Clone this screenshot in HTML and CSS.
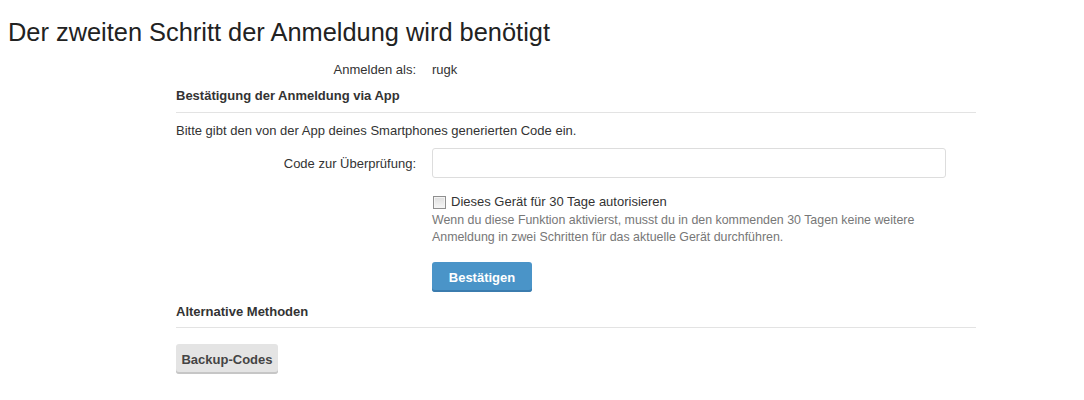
FILE: index.html
```html
<!DOCTYPE html>
<html lang="de">
<head>
<meta charset="utf-8">
<link rel="stylesheet" href="styles.css">
</head>
<body>
<h1 class="title">Der zweiten Schritt der Anmeldung wird benötigt</h1>
<div class="panel">
  <div class="row user-row">
    <div class="label">Anmelden als:</div>
    <div class="field">rugk</div>
  </div>
  <h3 class="section">Bestätigung der Anmeldung via App</h3>
  <p class="intro">Bitte gibt den von der App deines Smartphones generierten Code ein.</p>
  <div class="row code-row">
    <label class="label" for="code">Code zur Überprüfung:</label>
    <div class="field"><input id="code" class="input" type="text"></div>
  </div>
  <div class="row check-row">
    <div class="label"></div>
    <div class="field">
      <label class="check"><input type="checkbox" class="checkbox"> Dieses Gerät für 30 Tage autorisieren</label>
      <div class="hint">Wenn du diese Funktion aktivierst, musst du in den kommenden 30 Tagen keine weitere Anmeldung in zwei Schritten für das aktuelle Gerät durchführen.</div>
    </div>
  </div>
  <div class="row submit-row">
    <div class="label"></div>
    <div class="field"><button class="btn btn-primary">Bestätigen</button></div>
  </div>
  <h3 class="section alt">Alternative Methoden</h3>
  <div class="alt-buttons"><button class="btn btn-default">Backup-Codes</button></div>
</div>
</body>
</html>
```
FILE: styles.css
```css
html, body { margin: 0; padding: 0; background: #fff; }
body {
  font-family: "Liberation Sans", Arial, sans-serif;
  font-size: 13px;
  color: #333;
}
.title {
  margin: 18px 0 0 8px;
  font-size: 25.4px;
  font-weight: normal;
  line-height: 28px;
  color: #222;
}
.panel {
  width: 800px;
  margin: 0 0 0 176px;
  padding-top: 16px;
}
.row { display: flex; }
.label {
  width: 256px;
  text-align: right;
  padding-right: 16px;
  box-sizing: border-box;
  flex: none;
}
.field { flex: none; width: 514px; }
.user-row { line-height: 16px; }
.section {
  margin: 10px 0 0;
  padding-bottom: 8px;
  font-size: 13px;
  font-weight: bold;
  line-height: 16px;
  border-bottom: 1px solid #e3e3e3;
}
.intro { margin: 10px 0 0; line-height: 16px; }
.code-row { margin-top: 9px; align-items: center; }
.input {
  display: block;
  width: 514px;
  height: 30px;
  box-sizing: border-box;
  border: 1px solid #ddd;
  border-radius: 3px;
  margin: 0;
  padding: 4px 8px;
  font: inherit;
}
.check-row { margin-top: 16px; }
.check { display: flex; align-items: center; font-size: 13px; line-height: 16px; }
.checkbox {
  -webkit-appearance: none;
  appearance: none;
  width: 13px; height: 13px; margin: 0 5px 0 1px;
  box-sizing: border-box;
  border: 1px solid #8f8f8f;
  background: linear-gradient(#dedede, #f6f6f6);
  box-shadow: inset 0 0 0 1px #f4f4f4;
  border-radius: 0;
}
.hint {
  margin-top: 2px;
  color: #777;
  font-size: 12.4px;
  line-height: 17px;
  width: 514px;
}
.submit-row { margin-top: 16px; }
.btn {
  height: 30px;
  border: 0;
  border-radius: 3px;
  font-family: inherit;
  font-size: 13px;
  font-weight: bold;
  padding: 0 16px;
  cursor: pointer;
}
.btn-primary {
  width: 100px;
  background: #4a94c8;
  color: #fff;
  box-shadow: inset 0 -2px 0 #3b7cae;
}
.section.alt { margin-top: 12px; padding-bottom: 7px; }
.alt-buttons { margin-top: 16px; }
.btn-default {
  width: 102px;
  padding: 0;
  background: #e4e4e4;
  color: #444;
  box-shadow: inset 0 -2px 0 #c6c6c6;
}
```
